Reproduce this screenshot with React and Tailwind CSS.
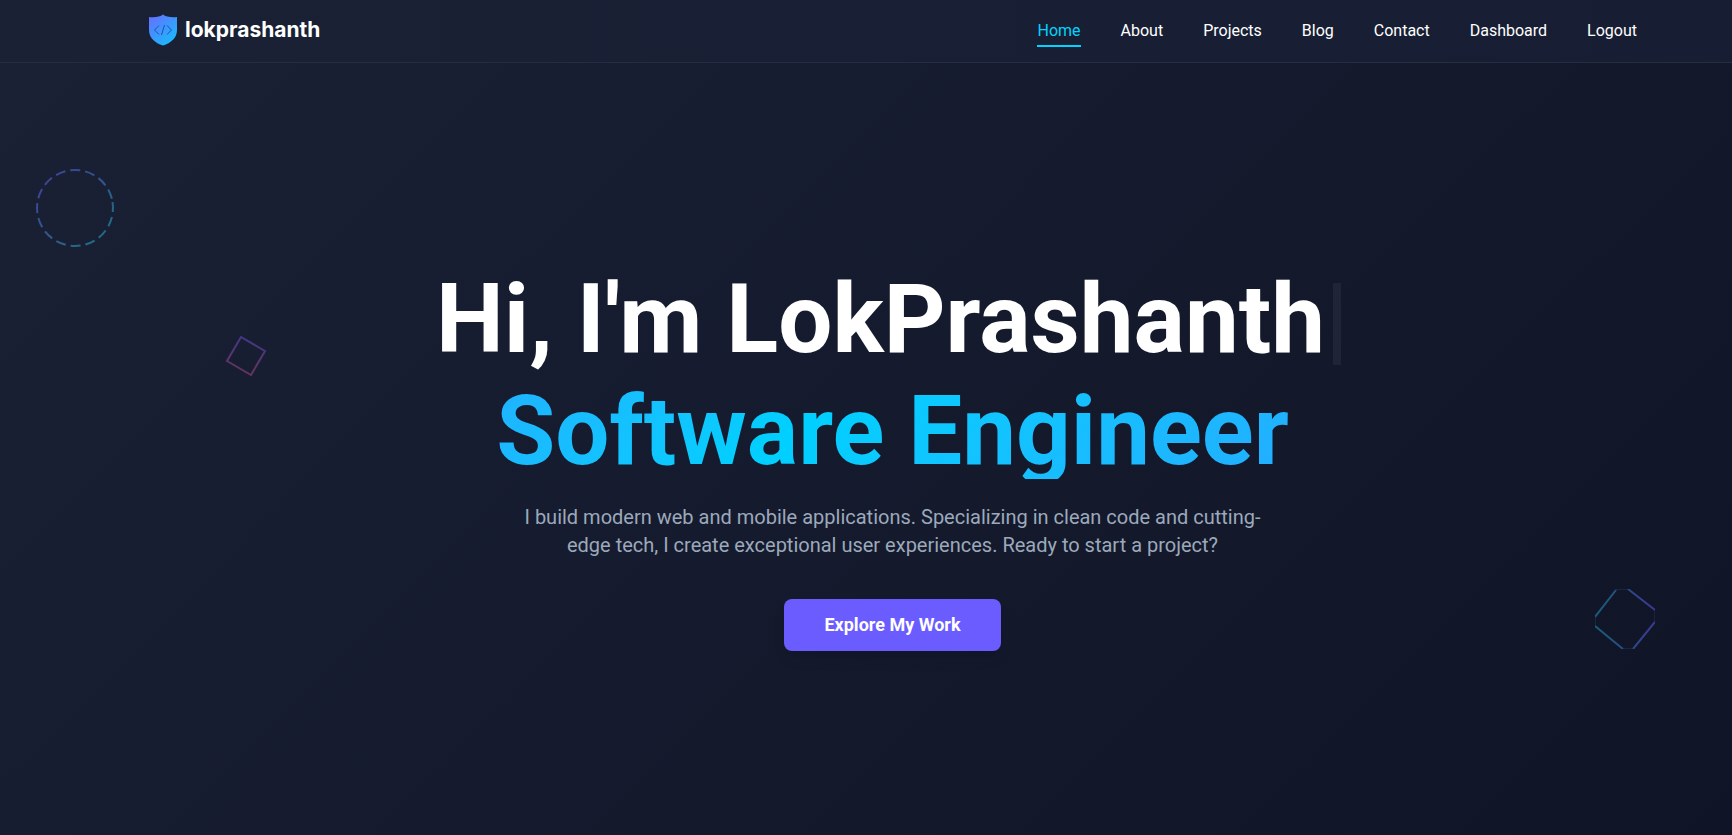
const navLinks = ["Home", "About", "Projects", "Blog", "Contact", "Dashboard", "Logout"];

function Logo() {
    return (
        <a href="#home" className="flex items-center gap-2">
            <svg width="28" height="32" viewBox="0 0 28 32" fill="none" aria-hidden="true">
                <defs>
                    <linearGradient id="shield" x1="0" y1="0" x2="20" y2="26" gradientUnits="userSpaceOnUse">
                        <stop offset="0" stopColor="#6a6bff" />
                        <stop offset="1" stopColor="#22b1ff" />
                    </linearGradient>
                </defs>
                <path
                    d="M14 0.5C16.5 2.6 22 3.6 28 3V16C28 24 22 29 14 31.5C6 29 0 24 0 16V3C6 3.6 11.5 2.6 14 0.5Z"
                    fill="url(#shield)"
                />
                <path d="M10 11.5L5.5 16L10 20.5M18 11.5L22.5 16L18 20.5M15.5 11L12.5 21" stroke="#2450a4" strokeWidth="1" />
            </svg>
            <span className="font-['Inter',sans-serif] text-[21px] leading-6 font-bold text-white">lokprashanth</span>
        </a>
    );
}

function Header() {
    return (
        <header className="border-b border-[#262d40] bg-linear-to-r from-[#1a2135] to-[#171e33] pl-[54px]">
            <div className="mx-auto flex max-w-[1536px] items-center justify-between px-6 pt-[13px] pb-[15px]">
                <Logo />
                <nav className="flex gap-10">
                    {navLinks.map((name) => (
                        <a
                            key={name}
                            href={"#" + name.toLowerCase()}
                            className={
                                name === "Home"
                                    ? "border-b-2 border-[#00d4ff] pt-[6px] pb-[2px] text-base leading-6 text-[#00d4ff]"
                                    : "border-b-2 border-transparent pt-[6px] pb-[2px] text-base leading-6 text-white"
                            }
                        >
                            {name}
                        </a>
                    ))}
                </nav>
            </div>
        </header>
    );
}

// outlined shapes floating behind the hero text
function Shapes() {
    return (
        <>
            <svg className="absolute top-[168px] left-[35px] opacity-50" width="80" height="80" viewBox="0 0 80 80" fill="none" aria-hidden="true">
                <defs>
                    <linearGradient id="ring" x1="0" y1="0" x2="0.6" y2="1">
                        <stop offset="0" stopColor="#6a5cff" />
                        <stop offset="1" stopColor="#2bb5d8" />
                    </linearGradient>
                </defs>
                <circle cx="40" cy="40" r="38" stroke="url(#ring)" strokeWidth="2" strokeDasharray="10 5" transform="rotate(-9 40 40)" />
            </svg>
            <svg className="absolute top-[330px] left-[220px] opacity-50" width="52" height="52" viewBox="0 0 52 52" fill="none" aria-hidden="true">
                <defs>
                    <linearGradient id="small" x1="30" y1="6" x2="22" y2="46" gradientUnits="userSpaceOnUse">
                        <stop offset="0" stopColor="#6a50e0" />
                        <stop offset="1" stopColor="#b84a80" />
                    </linearGradient>
                </defs>
                <path d="M21 7L45 21L31 45L7 31Z" stroke="url(#small)" strokeWidth="2" />
            </svg>
            <svg className="absolute top-[589px] left-[1595px] opacity-50" width="60" height="60" viewBox="0 0 60 60" fill="none" aria-hidden="true">
                <defs>
                    <linearGradient id="large" x1="0" y1="30" x2="60" y2="30" gradientUnits="userSpaceOnUse">
                        <stop offset="0" stopColor="#1fa6c8" />
                        <stop offset="1" stopColor="#6a5cff" />
                    </linearGradient>
                </defs>
                <path d="M0 28L21 1M33 0L60 21M60 33L38 60M28 60L0 37" stroke="url(#large)" strokeWidth="2" />
                <path d="M21 0H33M60 21V33M38 60H28M0 37V28" stroke="url(#large)" strokeWidth="1" strokeOpacity="0.6" />
            </svg>
        </>
    );
}

export default function App() {
    return (
        <div className="relative flex min-h-screen flex-col overflow-hidden bg-linear-135 from-[#1b2135] to-[#0f1426] font-['Roboto',sans-serif]">
            <Header />
            <Shapes />
            <main className="flex grow flex-col items-center justify-center pt-6 pl-[53px] text-center">
                <h1 className="flex w-full max-w-[1152px] flex-col gap-4 text-8xl leading-none font-bold text-white">
                    <span className="flex items-center justify-center">
                        Hi, I'm LokPrashanth
                        <span className="mx-2 mt-[10px] h-[82px] w-2 bg-white/5" />
                    </span>
                    <span className="bg-linear-135 from-[#25a8ff] from-5% via-[#00d0ff] via-42% to-[#28a2ff] bg-clip-text text-transparent">
                        Software Engineer
                    </span>
                </h1>
                <p className="mt-6 max-w-3xl text-xl leading-7 text-[#9ca9bb]">
                    I build modern web and mobile applications. Specializing in clean code and cutting-edge tech, I create
                    exceptional user experiences. Ready to start a project?
                </p>
                <button className="mt-10 rounded-lg bg-[#6a5cff] px-10 py-3 text-lg leading-7 font-bold text-white shadow-lg">
                    Explore My Work
                </button>
            </main>
        </div>
    );
}
